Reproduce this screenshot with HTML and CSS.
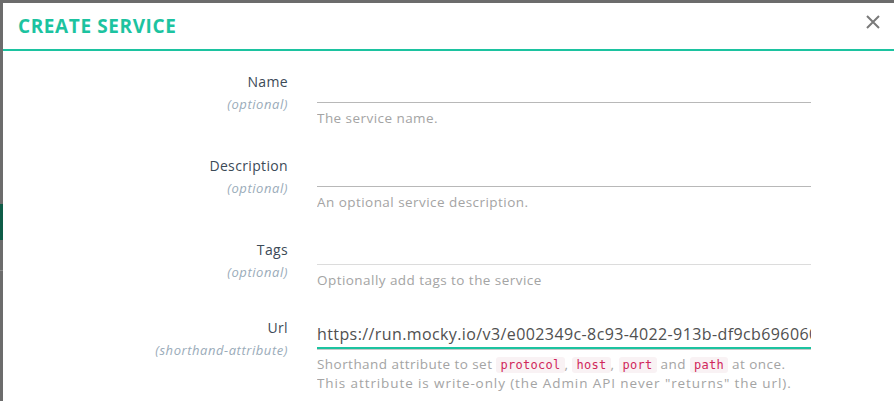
FILE: index.html
```html
<!DOCTYPE html>
<html>
<head>
<meta charset="utf-8">
<link rel="stylesheet" href="styles.css">
<title>Create Service</title>
</head>
<body>
<div class="page">
  <div class="backdrop">
    <div class="bd-top"></div>
    <div class="bd-green"></div>
    <div class="bd-mid"></div>
    <div class="bd-line"></div>
    <div class="bd-rest"></div>
  </div>
  <div class="modal">
    <div class="modal-header">
      <h1 class="modal-title">CREATE SERVICE</h1>
      <svg class="close" width="14" height="14" viewBox="0 0 14 14">
        <path d="M1 1 L13 13 M13 1 L1 13" stroke="#7a7a7a" stroke-width="2" fill="none"/>
      </svg>
    </div>
    <div class="modal-body">
      <div class="row">
        <div class="label"><div class="name">Name</div><div class="opt">(optional)</div></div>
        <div class="field">
          <div class="input"></div>
          <div class="help">The service name.</div>
        </div>
      </div>
      <div class="row">
        <div class="label"><div class="name">Description</div><div class="opt">(optional)</div></div>
        <div class="field">
          <div class="input"></div>
          <div class="help">An optional service description.</div>
        </div>
      </div>
      <div class="row">
        <div class="label"><div class="name">Tags</div><div class="opt">(optional)</div></div>
        <div class="field">
          <div class="input tags"></div>
          <div class="help tags-help">Optionally add tags to the service</div>
        </div>
      </div>
      <div class="row">
        <div class="label"><div class="name">Url</div><div class="opt">(shorthand-attribute)</div></div>
        <div class="field">
          <div class="input active"><span class="value">https://run.mocky.io/v3/e002349c-8c93-4022-913b-df9cb696060c</span></div>
          <div class="help">Shorthand attribute to set <code>protocol</code>, <code>host</code>, <code>port</code> and <code>path</code> at once.<br><span class="wide">This attribute is write-only (the Admin API never "returns" the url).</span></div>
        </div>
      </div>
    </div>
  </div>
</div>
</body>
</html>
```
FILE: styles.css
```css
html, body {
  margin: 0;
  padding: 0;
  height: 100%;
}
body {
  background: #6c6c6c;
  font-family: "Open Sans", "Liberation Sans", sans-serif;
  overflow: hidden;
}
.page {
  display: flex;
  height: 401px;
}
.backdrop {
  width: 3px;
  flex: none;
  display: flex;
  flex-direction: column;
}
.bd-top { height: 204px; }
.bd-green { height: 36px; background: #0f5c47; }
.bd-mid { height: 30px; }
.bd-line { height: 1px; background: #8a8a8a; }
.bd-rest { flex: 1; }
.modal {
  flex: 1;
  margin-top: 3px;
  background: #fff;
  min-width: 0;
}
.modal-header {
  height: 46px;
  border-bottom: 2px solid #1cc3a0;
  display: flex;
  align-items: center;
  justify-content: space-between;
  padding: 0 14px 0 15px;
}
.modal-title {
  margin: 0;
  font-size: 19px;
  font-weight: 700;
  color: #1cc3a0;
  letter-spacing: 0.6px;
}
.close { margin-top: -8px; }
.modal-body {
  display: flex;
  flex-direction: column;
  gap: 28px;
  padding-top: 20px;
}
.row {
  display: flex;
  gap: 29px;
}
.label {
  width: 285px;
  text-align: right;
  flex: none;
}
.name {
  font-size: 14px;
  line-height: 22px;
  color: #3c4a57;
  letter-spacing: 0.35px;
}
.opt {
  font-size: 13px;
  line-height: 22px;
  font-style: italic;
  color: #9aabb9;
  letter-spacing: 0.55px;
}
.field {
  width: 494px;
  max-width: 494px;
  flex: none;
  overflow: hidden;
}
.input {
  box-sizing: border-box;
  height: 32px;
  border-bottom: 1px solid #b8b8b8;
}
.input.tags {
  height: 26px;
  border-bottom-color: #dcdcdc;
}
.tags-help { padding-top: 5px; letter-spacing: 0.6px; }
.input.active {
  border-bottom: 2px solid #1cc3a0;
  box-shadow: 0 1px 0 #c8c8c8;
  margin-bottom: 1px;
  font-size: 16px;
  line-height: 34px;
  color: #505050;
  white-space: nowrap;
  overflow: hidden;
  width: 494px;
}
.value {
  letter-spacing: 0.4px;
}
.help {
  padding-top: 6px;
  font-size: 13.5px;
  line-height: 18px;
  color: #a4a4a4;
  letter-spacing: 0.45px;
  white-space: nowrap;
}
.wide { letter-spacing: 0.9px; }
.input.active + .help { padding-top: 5px; }
code {
  font-family: "DejaVu Sans Mono", monospace;
  font-size: 12px;
  letter-spacing: 0.3px;
  color: #d0275b;
  background: #f9f2f4;
  border-radius: 3px;
  padding: 1px 4px;
}
```
